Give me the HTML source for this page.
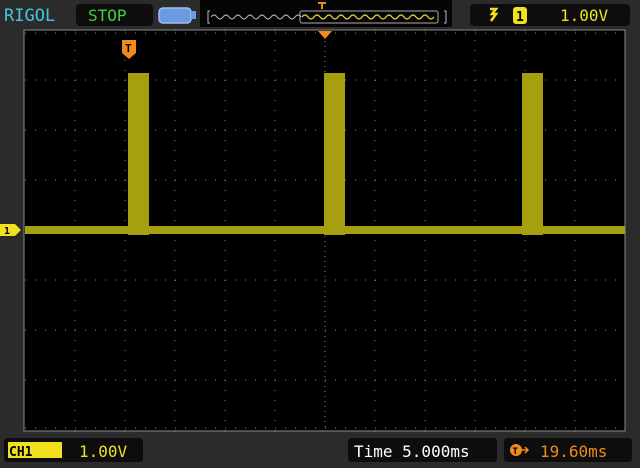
<!DOCTYPE html>
<html><head><style>
html,body{margin:0;padding:0;background:#2b2b2b;width:640px;height:468px;overflow:hidden}
body{font-family:"DejaVu Sans Mono","Liberation Mono",monospace}
</style></head><body>
<svg width="640" height="468" xmlns="http://www.w3.org/2000/svg" style="position:absolute;left:0;top:0">
<defs>
<pattern id="dots" width="10" height="10" patternUnits="userSpaceOnUse" x="25" y="30"><rect x="0" y="0" width="1.2" height="1.2" fill="#777"/></pattern>
</defs>
<rect width="640" height="468" fill="#2b2b2b"/>
<!-- header -->
<text x="4" y="21" fill="#3fc8dc" font-size="17" font-family="DejaVu Sans Mono,monospace">RIGOL</text>
<rect x="76" y="4" width="77" height="22" rx="4" fill="#0d0d0d"/>
<text x="88" y="21" fill="#3ed23e" font-size="16" font-family="DejaVu Sans Mono,monospace">STOP</text>
<rect x="159" y="8" width="32" height="15" rx="4" fill="#6a9ae0" stroke="#9cc0f4" stroke-width="1.5"/>
<rect x="191" y="11" width="5" height="8" fill="#6a9ae0"/>
<rect x="200" y="0" width="252" height="27" fill="#050505"/>
<path d="M210 11 h-2 v12 h2 M444 11 h2 v12 h-2" stroke="#bbb" fill="none"/>
<path d="M211 17 q3 -4 6 0 t6 0 t6 0 t6 0 t6 0 t6 0 t6 0 t6 0 t6 0 t6 0 t6 0 t6 0 t6 0 t6 0 t6 0" stroke="#bbb" fill="none" stroke-width="1"/>
<rect x="300" y="11" width="138" height="12" rx="2" fill="none" stroke="#aaa"/>
<path d="M302 17 q3 -4 6 0 t6 0 t6 0 t6 0 t6 0 t6 0 t6 0 t6 0 t6 0 t6 0 t6 0 t6 0 t6 0 t6 0 t6 0 t6 0 t6 0 t6 0 t6 0 t6 0 t6 0 t6 0" stroke="#e0d030" fill="none" stroke-width="1.2"/>
<path d="M318 3 h8 M322 3 v6" stroke="#f08a1a" stroke-width="2"/>
<rect x="470" y="4" width="160" height="22" rx="4" fill="#0d0d0d"/>
<path d="M490 9 h6 l-4 5 h4 l-5 7" stroke="#f0e020" stroke-width="2.5" fill="none"/>
<rect x="513" y="7" width="14" height="17" rx="3" fill="#f0e020"/>
<text x="516" y="21" fill="#000" font-size="13" font-weight="bold" font-family="DejaVu Sans Mono,monospace">1</text>
<text x="560" y="21" fill="#f0e020" font-size="16" font-family="DejaVu Sans Mono,monospace">1.00V</text>
<!-- screen -->
<rect x="24" y="30" width="601" height="401" fill="#000" stroke="#888" stroke-width="1"/>
<g stroke="#888" stroke-width="1" stroke-dasharray="1 9">
<path d="M75 30V431M125 30V431M175 30V431M225 30V431M275 30V431M375 30V431M425 30V431M475 30V431M525 30V431M575 30V431"/>
<path d="M25 80H625M25 130H625M25 180H625M25 280H625M25 330H625M25 380H625"/>
</g>
<g stroke="#888" stroke-width="1" stroke-dasharray="1 4">
<path d="M325 36V431M25 230H625"/>
<path d="M25 33H625M25 428H625" stroke-dasharray="1 9"/>
</g>
<!-- trace -->
<g fill="#a6a010">
<rect x="25" y="226" width="600" height="8"/>
<rect x="128" y="73" width="21" height="162"/>
<rect x="324" y="73" width="21" height="162"/>
<rect x="522" y="73" width="21" height="162"/>
</g>
<!-- markers -->
<path d="M318 31 h14 l-7 8z" fill="#f08a1a"/>
<path d="M122 40 h14 v13 l-7 6 l-7 -6z" fill="#f08a1a"/>
<text x="125" y="52" fill="#000" font-size="11" font-weight="bold" font-family="DejaVu Sans Mono,monospace">T</text>
<path d="M0 224 h15 l6 6 l-6 6 h-15z" fill="#f0e020"/>
<text x="4" y="234" fill="#000" font-size="10" font-weight="bold" font-family="DejaVu Sans Mono,monospace">1</text>
<!-- bottom -->
<rect x="4" y="438" width="139" height="24" rx="3" fill="#0d0d0d"/>
<rect x="8" y="442" width="54" height="16" fill="#f0e020"/>
<text x="9" y="456" fill="#000" font-size="13" font-weight="bold" font-family="DejaVu Sans Mono,monospace">CH1</text>
<text x="79" y="457" fill="#f0e020" font-size="16" font-family="DejaVu Sans Mono,monospace">1.00V</text>
<rect x="348" y="438" width="149" height="24" rx="3" fill="#0d0d0d"/>
<text x="354" y="457" fill="#fff" font-size="16" font-family="DejaVu Sans Mono,monospace">Time 5.000ms</text>
<rect x="504" y="438" width="128" height="24" rx="3" fill="#0d0d0d"/>
<circle cx="516" cy="450" r="6" fill="#f08a1a"/>
<text x="512.5" y="454" fill="#000" font-size="9" font-weight="bold" font-family="DejaVu Sans Mono,monospace">T</text>
<path d="M522 450 h6 M525 447 l3 3 l-3 3" stroke="#f08a1a" stroke-width="1.5" fill="none"/>
<text x="540" y="457" fill="#f08a1a" font-size="16" font-family="DejaVu Sans Mono,monospace">19.60ms</text>
</svg>
</body></html>
